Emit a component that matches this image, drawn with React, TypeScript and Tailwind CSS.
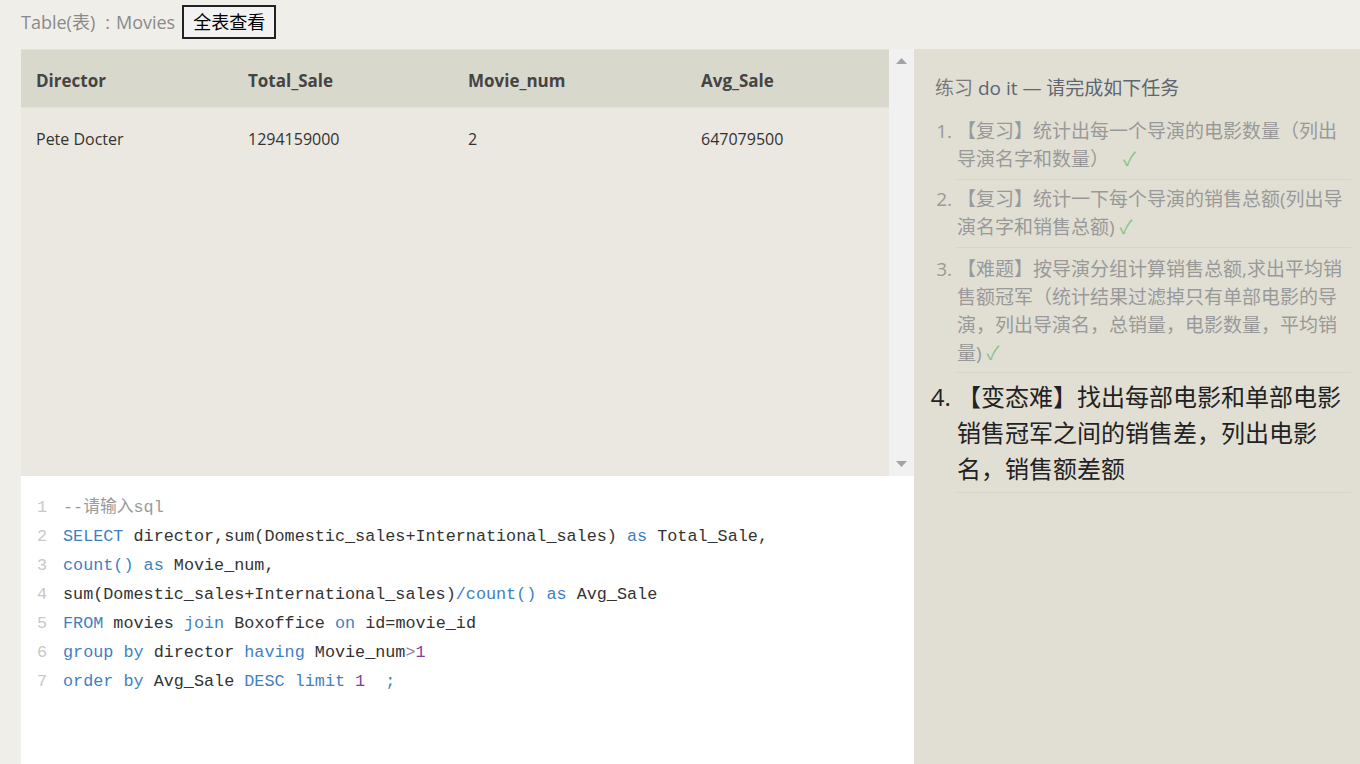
import React from 'react';

type Tok = { t: string; c?: 'k' | 'n' | 'm' | 'o' };

const codeLines: Tok[][] = [
    [{ t: '--请输入sql', c: 'm' }],
    [
        { t: 'SELECT', c: 'k' },
        { t: ' director,sum(Domestic_sales+International_sales) ' },
        { t: 'as', c: 'k' },
        { t: ' Total_Sale,' },
    ],
    [{ t: 'count()', c: 'k' }, { t: ' ' }, { t: 'as', c: 'k' }, { t: ' Movie_num,' }],
    [
        { t: 'sum(Domestic_sales+International_sales)' },
        { t: '/count()', c: 'k' },
        { t: ' ' },
        { t: 'as', c: 'k' },
        { t: ' Avg_Sale' },
    ],
    [
        { t: 'FROM', c: 'k' },
        { t: ' movies ' },
        { t: 'join', c: 'k' },
        { t: ' Boxoffice ' },
        { t: 'on', c: 'k' },
        { t: ' id=movie_id' },
    ],
    [
        { t: 'group by', c: 'k' },
        { t: ' director ' },
        { t: 'having', c: 'k' },
        { t: ' Movie_num' },
        { t: '>', c: 'o' },
        { t: '1', c: 'n' },
    ],
    [
        { t: 'order by', c: 'k' },
        { t: ' Avg_Sale ' },
        { t: 'DESC', c: 'k' },
        { t: ' ' },
        { t: 'limit', c: 'k' },
        { t: ' ' },
        { t: '1', c: 'n' },
        { t: '  ;', c: 'k' },
    ],
];

const tokColor = (c?: Tok['c']) => {
    switch (c) {
        case 'k':
            return 'text-[#3f7fc4]';
        case 'n':
            return 'text-[#7b3f9a]';
        case 'o':
            return 'text-[#9a7aa0]';
        case 'm':
            return 'text-[#9a9a9a]';
        default:
            return 'text-[#333333]';
    }
};

const columns = ['Director', 'Total_Sale', 'Movie_num', 'Avg_Sale'];
const row = ['Pete Docter', '1294159000', '2', '647079500'];

const tasks = [
    {
        text: '【复习】统计出每一个导演的电影数量（列出导演名字和数量）',
        check: 'ml-[14px] text-[#87c487]',
        li: 'pt-[5px] pb-[6px] leading-[27.5px]',
    },
    {
        text: '【复习】统计一下每个导演的销售总额(列出导演名字和销售总额)',
        check: 'ml-[5px] text-[#87c487]',
        li: 'pt-[6px] pb-[6px] leading-[27.5px]',
    },
    {
        text: '【难题】按导演分组计算销售总额,求出平均销售额冠军（统计结果过滤掉只有单部电影的导演，列出导演名，总销量，电影数量，平均销量)',
        check: 'ml-[5px] text-[#87c487]',
        li: 'pt-[7px] pb-[5px] leading-[28px]',
    },
];

const App: React.FC = () => {
    return (
        <div className="h-[764px] overflow-hidden bg-[#f0eee8] font-['Open_Sans','Noto_Sans_CJK_SC',sans-serif]">
            <div className="flex h-[49px] items-start pl-[21px] pt-[5px]">
                <div className="flex h-[34px] items-center text-[18px] text-[#8a8a8a]">
                    Table(表)<span className="ml-[10px] mr-[6px]">:</span>Movies
                </div>
                <button className="ml-[7px] flex h-[34px] items-center border-2 border-[#222] bg-[#f2f2f2] px-[9px] text-[18px] text-black">
                    全表查看
                </button>
            </div>

            <div className="flex h-[715px] pl-[21px]">
                <div className="flex w-[893px] flex-col">
                    <div className="flex h-[427px]">
                        <div className="flex-1 border-t border-[#e2e1da] bg-[#eae8e0]">
                            <div className="grid h-[58px] grid-cols-[212px_220px_233px_1fr] items-center border-b border-[#dfe2e6] bg-[#d9d8cc] pt-[4px] text-[17px] font-bold text-[#444]">
                                {columns.map((c) => (
                                    <div key={c} className="pl-[15px]">
                                        {c}
                                    </div>
                                ))}
                            </div>
                            <div className="grid h-[58px] grid-cols-[212px_220px_233px_1fr] items-center pt-[3px] text-[16px] text-[#333]">
                                {row.map((c) => (
                                    <div key={c} className="pl-[15px]">
                                        {c}
                                    </div>
                                ))}
                            </div>
                        </div>
                        <div className="flex w-[25px] flex-col items-center justify-between bg-[#f1f1f1] py-[9px]">
                            <svg width="11" height="6" viewBox="0 0 11 6">
                                <path d="M5.5 0 L11 6 L0 6 Z" fill="#a3a3a3" />
                            </svg>
                            <svg width="11" height="6" viewBox="0 0 11 6">
                                <path d="M0 0 L11 0 L5.5 6 Z" fill="#a3a3a3" />
                            </svg>
                        </div>
                    </div>

                    <div className="flex-1 bg-white pt-[17px] font-['Liberation_Mono','Noto_Sans_CJK_SC',monospace] text-[16.8px] leading-[29px]">
                        {codeLines.map((line, i) => (
                            <div key={i} className="flex">
                                <span className="w-[26px] text-right text-[#c8c8c8]">{i + 1}</span>
                                <span className="whitespace-pre pl-[16px]">
                                    {line.map((tok, j) => (
                                        <span key={j} className={tokColor(tok.c)}>
                                            {tok.t}
                                        </span>
                                    ))}
                                </span>
                            </div>
                        ))}
                    </div>
                </div>

                <div className="flex-1 bg-[#e1dfd3] pl-[21px] pr-[9px] pt-[25px]">
                    <h2 className="text-[19px] leading-[28px]">
                        <span className="text-[#7a7a7a]">练习 </span>
                        <span className="text-[#5d6672]">do it — 请完成如下任务</span>
                    </h2>
                    <ol className="mt-[11px] list-decimal pl-[22px]">
                        {tasks.map((task, i) => (
                            <li key={i} className={`border-b border-[#d6d4c8] text-[19px] text-[#999] ${task.li}`}>
                                {task.text}
                                <span className={task.check}>✓</span>
                            </li>
                        ))}
                        <li className="border-b border-[#d6d4c8] pb-[5px] pt-[6px] text-[24px] leading-[36px] text-[#222]">
                            【变态难】找出每部电影和单部电影销售冠军之间的销售差，列出电影名，销售额差额
                        </li>
                    </ol>
                </div>
            </div>
        </div>
    );
};

export default App;
